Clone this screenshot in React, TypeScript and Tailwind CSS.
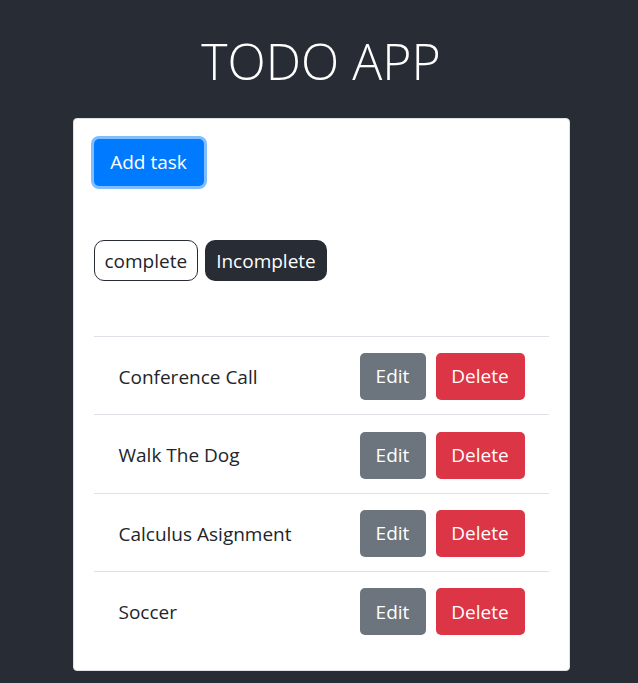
const tasks = ["Conference Call", "Walk The Dog", "Calculus Asignment", "Soccer"];

export default function App() {
  return (
    <div className="min-h-screen bg-[#282c34] pl-[4px] pt-[28px] text-[#212529] font-['Open_Sans',sans-serif]">
      <h1 className="text-center text-[50px] leading-[66px] font-light text-white">TODO APP</h1>

      <div className="mx-auto mt-[24px] w-[497px] rounded border border-[#dee2e6] bg-white p-5">
        <button className="h-[47px] w-[110px] rounded-[5px] bg-[#007bff] text-[19px] text-white ring-[3px] ring-[#80bdff]">
          Add task
        </button>

        <div className="mt-[54px] flex gap-[7px]">
          <span className="flex h-[41px] items-center rounded-[10px] border border-[#282c34] px-[10px] pt-[2px] text-[19px]">
            complete
          </span>
          <span className="flex h-[41px] items-center rounded-[10px] bg-[#282c34] px-[11px] pt-[2px] text-[19px] text-white">
            Incomplete
          </span>
        </div>

        <ul className="mt-[55px]">
          {tasks.map((t) => (
            <li
              key={t}
              className="flex h-[78.4px] items-center justify-between border-t border-[#dee2e6] pl-[25px] pr-[24px]"
            >
              <span className="pt-[3px] text-[19px]">{t}</span>
              <div className="flex gap-[10px] pt-[2px]">
                <button className="h-[47px] w-[66px] rounded-[5px] bg-[#6c757d] text-[19px] text-white">Edit</button>
                <button className="h-[47px] w-[89px] rounded-[5px] bg-[#dc3545] text-[19px] text-white">Delete</button>
              </div>
            </li>
          ))}
        </ul>
      </div>
    </div>
  );
}
